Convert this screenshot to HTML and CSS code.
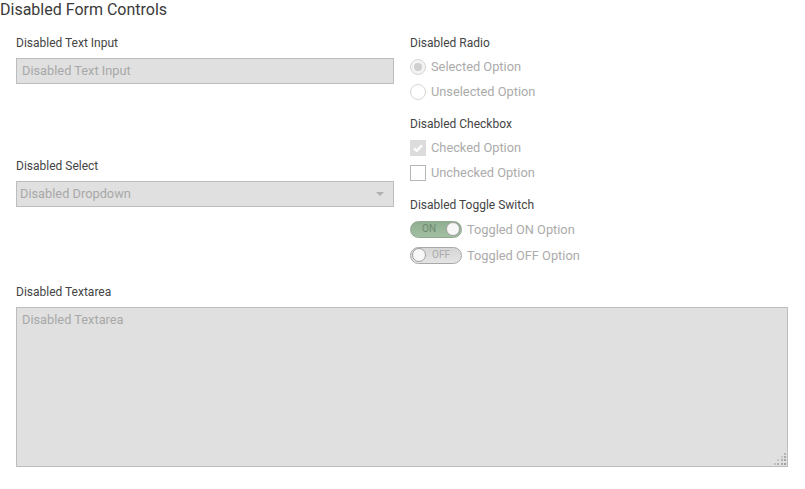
FILE: index.html
```html
<!DOCTYPE html>
<html>
<head>
<meta charset="utf-8">
<link rel="stylesheet" href="styles.css">
</head>
<body>
<div class="page">
  <h1 class="title">Disabled Form Controls</h1>
  <div class="grid">
    <div class="col col-left">
      <div class="field">
        <label class="label">Disabled Text Input</label>
        <input class="text-input" type="text" value="Disabled Text Input" disabled>
      </div>
      <div class="field field-select">
        <label class="label">Disabled Select</label>
        <div class="select-wrap">
          <select class="select" disabled><option>Disabled Dropdown</option></select>
        </div>
      </div>
    </div>
    <div class="col col-right">
      <div class="group">
        <div class="label">Disabled Radio</div>
        <div class="option"><span class="radio radio-on"></span><span class="opt-text">Selected Option</span></div>
        <div class="option"><span class="radio"></span><span class="opt-text">Unselected Option</span></div>
      </div>
      <div class="group">
        <div class="label">Disabled Checkbox</div>
        <div class="option"><span class="check check-on"><svg width="12" height="12" viewBox="0 0 12 12"><path d="M2 6.2 L4.8 9 L10 3.2" fill="none" stroke="#fff" stroke-width="2.2"/></svg></span><span class="opt-text">Checked Option</span></div>
        <div class="option"><span class="check"></span><span class="opt-text">Unchecked Option</span></div>
      </div>
      <div class="group">
        <div class="label">Disabled Toggle Switch</div>
        <div class="option toggle-row"><span class="toggle toggle-on"><span class="toggle-text">ON</span><span class="knob"></span></span><span class="opt-text">Toggled ON Option</span></div>
        <div class="option toggle-row"><span class="toggle toggle-off"><span class="knob"></span><span class="toggle-text">OFF</span></span><span class="opt-text">Toggled OFF Option</span></div>
      </div>
    </div>
    <div class="field field-wide">
      <label class="label">Disabled Textarea</label>
      <div class="textarea-wrap">
        <textarea class="textarea" disabled>Disabled Textarea</textarea>
        <svg class="grip" width="12" height="12" viewBox="0 0 12 12">
          <rect x="10" y="0" width="2" height="2" fill="#b8b8b8"/>
          <rect x="7" y="3" width="2" height="2" fill="#c8c8c8"/>
          <rect x="10" y="3" width="2" height="2" fill="#a8a8a8"/>
          <rect x="3" y="6" width="2" height="2" fill="#c8c8c8"/>
          <rect x="7" y="6" width="2" height="2" fill="#b0b0b0"/>
          <rect x="10" y="6" width="2" height="2" fill="#a8a8a8"/>
          <rect x="0" y="10" width="2" height="2" fill="#c0c0c0"/>
          <rect x="3" y="10" width="2" height="2" fill="#b0b0b0"/>
          <rect x="7" y="10" width="2" height="2" fill="#a8a8a8"/>
          <rect x="10" y="10" width="2" height="2" fill="#a0a0a0"/>
        </svg>
      </div>
    </div>
  </div>
</div>
</body>
</html>
```
FILE: styles.css
```css
html, body { margin: 0; padding: 0; background: #fff; }
body { font-family: Roboto, "Liberation Sans", sans-serif; }
.page { padding: 0 17px 0 0; }
.title { margin: 0; font-size: 16px; line-height: 20px; font-weight: 400; color: #3a3a3a; }
.grid {
  display: grid;
  grid-template-columns: 378px 1fr;
  column-gap: 16px;
  row-gap: 19px;
  margin-top: 16px;
  padding-left: 16px;
}
.col { display: flex; flex-direction: column; }
.col-left { gap: 75px; }
.col-right { gap: 15px; }
.field { display: flex; flex-direction: column; }
.field-wide { grid-column: 1 / span 2; }
.label { display: block; font-size: 12px; line-height: 14px; color: #444; margin-bottom: 8px; }
.text-input, .select, .textarea {
  box-sizing: border-box;
  font-family: Roboto, "Liberation Sans", sans-serif;
  font-size: 12.8px;
  color: #a8a8a8;
  background: #e0e0e0;
  border: 1px solid #bdbdbd;
  border-radius: 0;
  margin: 0;
  outline: none;
}
.text-input { height: 26px; padding: 0 5px 1px; width: 100%; }
.select-wrap { position: relative; }
.select {
  -webkit-appearance: none;
  appearance: none;
  width: 100%;
  height: 26px;
  padding: 0 3px 2px;
  opacity: 1;
}
.select-wrap::after {
  content: "";
  position: absolute;
  right: 10px;
  top: 11px;
  border-left: 4px solid transparent;
  border-right: 4px solid transparent;
  border-top: 4px solid #b0b0b0;
}
.textarea-wrap { position: relative; }
.textarea { height: 160px; width: 100%; padding: 4px 5px; resize: none; display: block; }
.grip { position: absolute; right: 2px; bottom: 2px; }
.group { display: flex; flex-direction: column; }
.group .label { margin-bottom: 6px; }
.option { display: flex; align-items: center; height: 21px; }
.option + .option { margin-top: 4px; }
.toggle-row { height: 22px; }
.opt-text { font-size: 12.8px; color: #ababab; margin-left: 5px; }
.radio {
  box-sizing: border-box;
  width: 16px; height: 16px;
  border-radius: 50%;
  border: 1px solid #d6d6d6;
  background: #fff;
  display: flex; align-items: center; justify-content: center;
}
.radio-on { background: #f3f3f3; }
.radio-on::after { content: ""; width: 8px; height: 8px; border-radius: 50%; background: #cfcfcf; }
.check {
  box-sizing: border-box;
  width: 16px; height: 16px;
  border: 1px solid #b5b5b5;
  background: #fff;
  display: flex; align-items: center; justify-content: center;
}
.check-on { background: #dcdcdc; border-color: #dcdcdc; }
.toggle {
  box-sizing: border-box;
  position: relative;
  width: 52px; height: 17px;
  border-radius: 9px;
  display: flex; align-items: center;
}
.toggle-on {
  background: linear-gradient(#8fae8f, #a3bfa3);
  border: 1px solid #90a890;
  justify-content: space-between;
  padding: 0 1px 0 11px;
}
.toggle-off {
  background: linear-gradient(#d6d6d6, #e4e4e4);
  border: 1px solid #a8a8a8;
  padding: 0 0 0 1px;
}
.toggle-text { font-size: 10px; line-height: 1; }
.toggle-on .toggle-text { color: #6e8a6e; }
.toggle-off .toggle-text { color: #a9a9a9; margin-left: 6px; }
.knob {
  box-sizing: border-box;
  width: 14px; height: 14px;
  border-radius: 50%;
  background: #f7f7f7;
  border: 1px solid #a0a0a0;
}
```
